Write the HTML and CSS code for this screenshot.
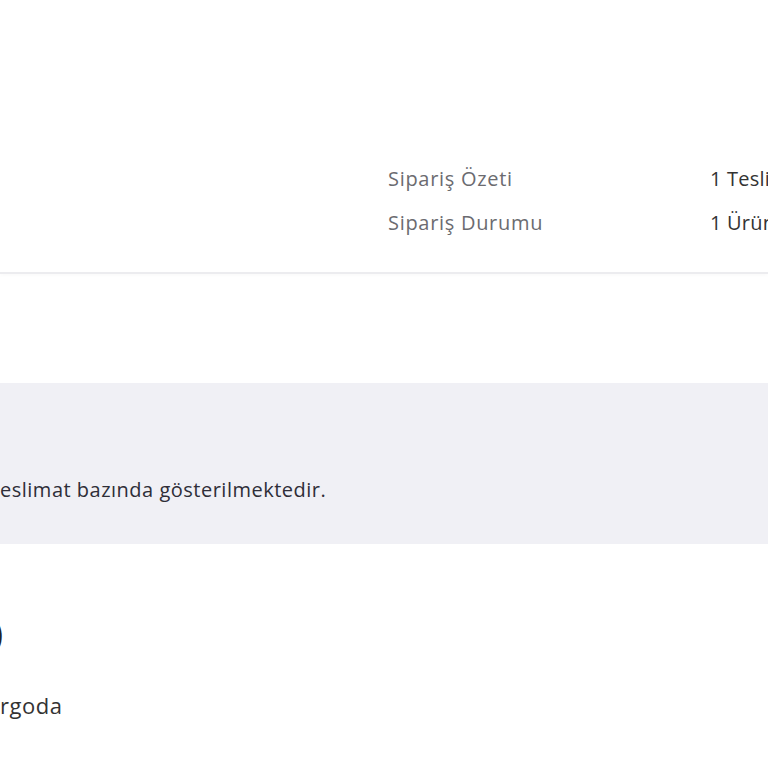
FILE: index.html
```html
<!DOCTYPE html>
<html lang="tr">
<head>
<meta charset="utf-8">
<title>Sipariş Detayı</title>
<link rel="stylesheet" href="styles.css">
</head>
<body>
<main class="page">
  <section class="summary">
    <div class="summary-grid">
      <span class="label">Sipariş Özeti</span>
      <span class="value">1 Teslimat, 1 Ürün</span>
      <span class="label">Sipariş Durumu</span>
      <span class="value">1 Ürün Kargoda</span>
    </div>
  </section>
  <section class="notice">
    <p class="notice-text"><span class="clip">Siparişiniz t</span>eslimat bazında gösterilmektedir.</p>
  </section>
  <section class="delivery">
    <h2 class="delivery-title"><span class="clip-title">Teslimat 1 (1</span>)</h2>
    <p class="delivery-status"><span class="clip-status">Ka</span>rgoda</p>
  </section>
</main>
</body>
</html>
```
FILE: styles.css
```css
html, body {
  margin: 0;
  padding: 0;
  background: #ffffff;
  overflow: hidden;
}
body {
  width: 768px;
  height: 768px;
  font-family: "Open Sans", Lato, "Liberation Sans", sans-serif;
  color: #333333;
}
.page {
  display: flex;
  flex-direction: column;
}
.summary {
  padding: 156px 0 28px 388px;
  border-bottom: 2px solid #ececef;
  box-shadow: 0 2px 3px rgba(0, 0, 0, 0.02);
}
.summary-grid {
  display: grid;
  grid-template-columns: 322px max-content;
  grid-auto-rows: 44px;
  align-items: center;
  font-size: 20px;
  letter-spacing: 0.7px;
  white-space: nowrap;
}
.label {
  color: #6b6b70;
}
.value {
  color: #333333;
  letter-spacing: 0.2px;
}
.notice {
  margin-top: 109px;
  height: 161px;
  background: #f0f0f5;
  display: flex;
  align-items: flex-end;
  white-space: nowrap;
  overflow: hidden;
}
.notice-text {
  margin: 0 0 42px 0;
  font-size: 20px;
  letter-spacing: 0.5px;
  color: #2e2e38;
  line-height: 24px;
}
.clip {
  display: inline-block;
  margin-left: -140px;
  width: 140px;
  overflow: hidden;
  text-align: right;
  vertical-align: bottom;
}
.delivery {
  padding-top: 58px;
  white-space: nowrap;
  overflow: hidden;
}
.delivery-title {
  margin: 0 0 0 -7px;
  font-size: 34px;
  line-height: 44px;
  font-weight: 400;
  color: #222228;
}
.clip-title {
  display: inline-block;
  margin-left: -200px;
  width: 200px;
  overflow: hidden;
}
.delivery-status {
  margin: 36px 0 0 0;
  font-size: 22px;
  line-height: 28px;
  letter-spacing: 0.5px;
  color: #333333;
}
.clip-status {
  display: inline-block;
  margin-left: -100px;
  width: 100px;
  overflow: hidden;
  text-align: right;
  vertical-align: bottom;
}
```
